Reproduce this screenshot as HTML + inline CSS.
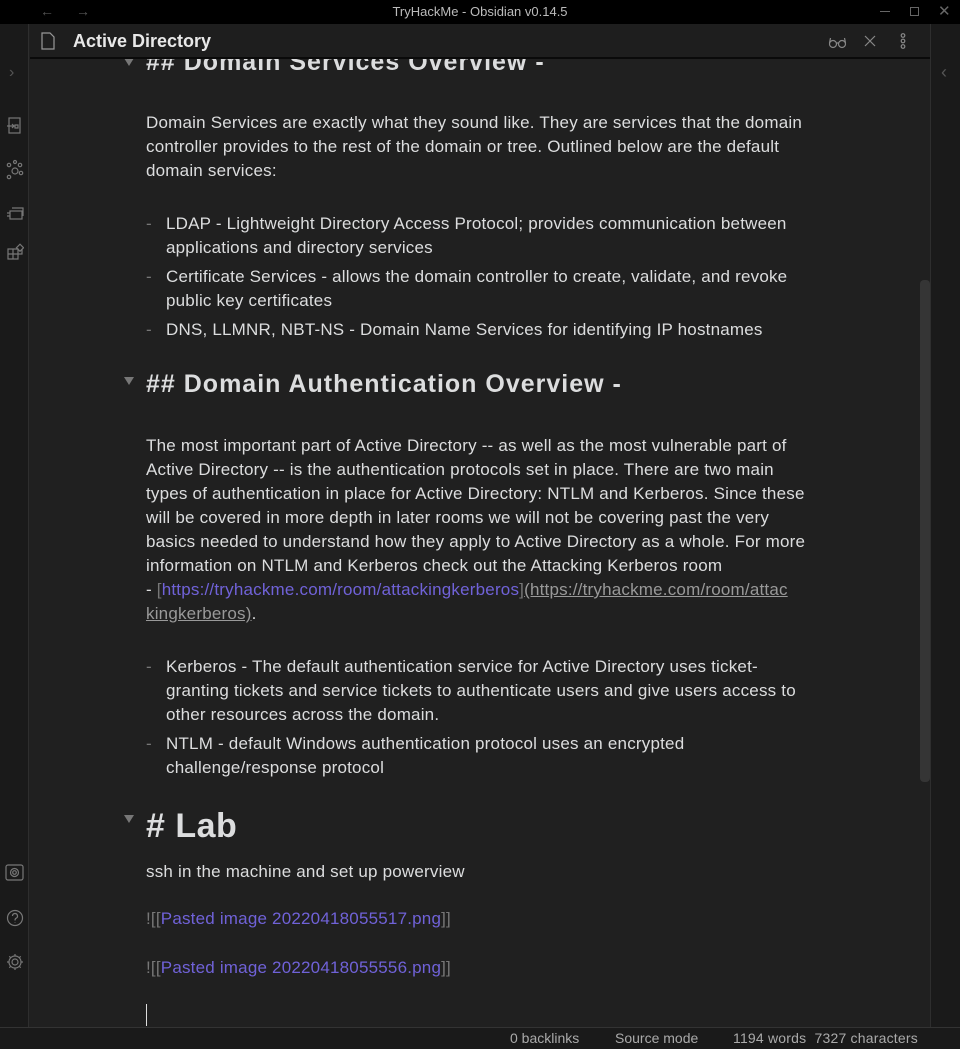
<!DOCTYPE html>
<html><head><meta charset="utf-8"><style>
*{margin:0;padding:0;box-sizing:border-box}
body{width:960px;height:1049px;background:#202020;font-family:"Liberation Sans",sans-serif;color:#dcddde;position:relative;overflow:hidden}
.a{position:absolute;white-space:nowrap}
.t{font-size:17px;line-height:24px;letter-spacing:0.2px}
.h2{font-size:25px;font-weight:bold;color:#dcddde;letter-spacing:1px}
.h1{font-size:34px;font-weight:bold;letter-spacing:0.5px}
.l{color:#7062d8}
.g{color:#777}
.u{color:#999;text-decoration:underline}
.tri{position:absolute;width:0;height:0;border-left:5px solid transparent;border-right:5px solid transparent;border-top:8px solid #777}
</style></head><body>
<div class="a" style="left:0;top:0;width:960px;height:24px;background:#000"></div>
<div class="a" style="left:40px;top:3px;font-size:14px;color:#555">←</div>
<div class="a" style="left:76px;top:3px;font-size:14px;color:#555">→</div>
<div class="a" style="left:0;top:4px;width:960px;text-align:center;font-size:13px;color:#bbb">TryHackMe - Obsidian v0.14.5</div>
<div class="a" style="left:880px;top:11px;width:10px;height:1px;background:#666"></div>
<div class="a" style="left:910px;top:7px;width:9px;height:9px;border:1px solid #666"></div>
<div class="a" style="left:938px;top:2px;font-size:15px;color:#666">✕</div>
<div class="a" style="left:0;top:24px;width:29px;height:1003px;background:#1a1a1a;border-right:1px solid #2e2e2e"></div>
<div class="a" style="left:9px;top:64px;font-size:16px;color:#555">›</div>
<svg class="a" style="left:6px;top:117px" width="18" height="170" fill="none" stroke="#777" stroke-width="1.2">
<rect x="3" y="1" width="11" height="15"/><path d="M1 9h7M6 7l2 2-2 2M9 8h3v3H9z"/>
<circle cx="9" cy="54" r="3"/><circle cx="3" cy="48" r="1.7"/><circle cx="14" cy="48" r="1.7"/><circle cx="3" cy="60" r="1.7"/><circle cx="15" cy="56" r="1.7"/><circle cx="9" cy="45" r="1.5"/>
<rect x="4" y="94" width="12" height="8"/><path d="M6 91h11v8M1 96h3M1 99h3"/>
<path d="M2 132h10v10H2zM2 137h10M7 132v10M12 137h4v-5"/><rect x="12" y="128" width="5" height="5" transform="rotate(45 14 130)"/>
</svg>
<svg class="a" style="left:5px;top:863px" width="20" height="110" fill="none" stroke="#777" stroke-width="1.2">
<rect x="1" y="2" width="17" height="15" rx="2"/><circle cx="9.5" cy="9.5" r="4"/><circle cx="9.5" cy="9.5" r="1.8"/>
<circle cx="10" cy="55" r="7.5"/><path d="M7.5 53a2.5 2.5 0 1 1 3.5 2.3c-1 .5-1 1.2-1 2.2M10 59.5v.5"/>
<circle cx="10" cy="99" r="3"/><path d="M10 91v2M10 105v2M2 99h2M16 99h2M4.3 93.3l1.5 1.5M14.2 103.2l1.5 1.5M4.3 104.7l1.5-1.5M14.2 94.8l1.5-1.5"/><circle cx="10" cy="99" r="6"/>
</svg>
<div class="a" style="left:930px;top:24px;width:30px;height:1003px;background:#1a1a1a;border-left:1px solid #2e2e2e"></div>
<div class="a" style="left:941px;top:62px;font-size:18px;color:#555">‹</div>
<div class="tri" style="left:124px;top:58px"></div>
<div class="a h2" style="left:146px;top:48px">## Domain Services Overview -</div>
<div class="a" style="left:30px;top:24px;width:900px;height:35px;background:#1e1e1e;border-bottom:2px solid #0a0a0a"></div>
<svg class="a" style="left:41px;top:32px" width="14" height="18" fill="none" stroke="#999" stroke-width="1.2"><path d="M1 1h8l4 4v12H1z"/></svg>
<div class="a" style="left:73px;top:31px;font-size:18px;font-weight:bold;color:#e8e8e8">Active Directory</div>
<svg class="a" style="left:828px;top:33px" width="90" height="18" fill="none" stroke="#888" stroke-width="1.2">
<circle cx="5" cy="11" r="3.5"/><circle cx="14" cy="11" r="3.5"/><path d="M8.5 10h2M1.5 10l1-5M17.5 10l-1-5"/>
<path d="M37 3l10 10M47 3L37 13"/>
<circle cx="75" cy="2.5" r="1.8"/><circle cx="75" cy="8" r="1.8"/><circle cx="75" cy="13.5" r="1.8"/>
</svg>
<div class="a" style="left:920px;top:280px;width:10px;height:502px;background:#353535;border-radius:4px"></div>
<div class="a t" style="left:146px;top:111px">Domain Services are exactly what they sound like. They are services that the domain</div>
<div class="a t" style="left:146px;top:135px">controller provides to the rest of the domain or tree. Outlined below are the default</div>
<div class="a t" style="left:146px;top:159px">domain services:</div>
<div class="a t" style="left:146px;top:212px"><span class="g">-</span></div><div class="a t" style="left:166px;top:212px">LDAP - Lightweight Directory Access Protocol; provides communication between</div>
<div class="a t" style="left:166px;top:236px">applications and directory services</div>
<div class="a t" style="left:146px;top:265px"><span class="g">-</span></div><div class="a t" style="left:166px;top:265px">Certificate Services - allows the domain controller to create, validate, and revoke</div>
<div class="a t" style="left:166px;top:289px">public key certificates</div>
<div class="a t" style="left:146px;top:318px"><span class="g">-</span></div><div class="a t" style="left:166px;top:318px">DNS, LLMNR, NBT-NS - Domain Name Services for identifying IP hostnames</div>
<div class="tri" style="left:124px;top:377px"></div>
<div class="a h2" style="left:146px;top:370px">## Domain Authentication Overview -</div>
<div class="a t" style="left:146px;top:434px">The most important part of Active Directory -- as well as the most vulnerable part of</div>
<div class="a t" style="left:146px;top:458px">Active Directory -- is the authentication protocols set in place. There are two main</div>
<div class="a t" style="left:146px;top:482px">types of authentication in place for Active Directory: NTLM and Kerberos. Since these</div>
<div class="a t" style="left:146px;top:506px">will be covered in more depth in later rooms we will not be covering past the very</div>
<div class="a t" style="left:146px;top:530px">basics needed to understand how they apply to Active Directory as a whole. For more</div>
<div class="a t" style="left:146px;top:554px">information on NTLM and Kerberos check out the Attacking Kerberos room</div>
<div class="a t" style="left:146px;top:578px">- <span class="g">[</span><span class="l">https://tryhackme.com/room/attackingkerberos</span><span class="g">]</span><span class="u">(https://tryhackme.com/room/attac</span></div>
<div class="a t" style="left:146px;top:602px"><span class="u">kingkerberos)</span>.</div>
<div class="a t" style="left:146px;top:655px"><span class="g">-</span></div><div class="a t" style="left:166px;top:655px">Kerberos - The default authentication service for Active Directory uses ticket-</div>
<div class="a t" style="left:166px;top:679px">granting tickets and service tickets to authenticate users and give users access to</div>
<div class="a t" style="left:166px;top:703px">other resources across the domain.</div>
<div class="a t" style="left:146px;top:732px"><span class="g">-</span></div><div class="a t" style="left:166px;top:732px">NTLM - default Windows authentication protocol uses an encrypted</div>
<div class="a t" style="left:166px;top:756px">challenge/response protocol</div>
<div class="tri" style="left:124px;top:815px"></div>
<div class="a h1" style="left:146px;top:807px">#&nbsp;Lab</div>
<div class="a t" style="left:146px;top:860px">ssh in the machine and set up powerview</div>
<div class="a t" style="left:146px;top:907px"><span class="g">![[</span><span class="l">Pasted image 20220418055517.png</span><span class="g">]]</span></div>
<div class="a t" style="left:146px;top:956px"><span class="g">![[</span><span class="l">Pasted image 20220418055556.png</span><span class="g">]]</span></div>
<div class="a" style="left:146px;top:1004px;width:1px;height:22px;background:#ddd"></div>
<div class="a" style="left:0;top:1027px;width:960px;height:22px;background:#1a1a1a;border-top:1px solid #333"></div>
<div class="a" style="left:510px;top:1030px;font-size:14px;color:#aaa">0 backlinks</div>
<div class="a" style="left:615px;top:1030px;font-size:14px;color:#aaa">Source mode</div>
<div class="a" style="left:733px;top:1030px;font-size:14px;color:#aaa;letter-spacing:0.2px">1194 words&nbsp; 7327 characters</div>
</body></html>
